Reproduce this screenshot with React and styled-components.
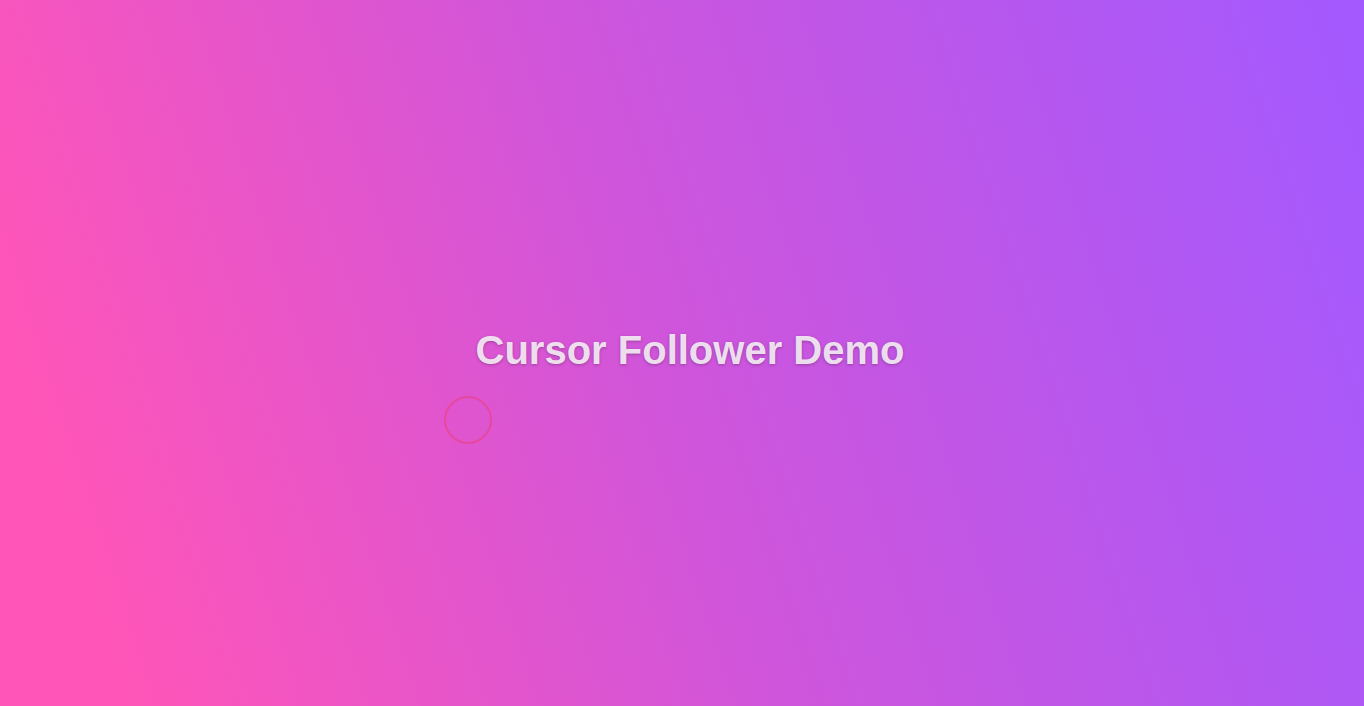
import styled, { createGlobalStyle } from "styled-components";

const GlobalStyle = createGlobalStyle`
  html, body {
    margin: 0;
    padding: 0;
    height: 100%;
  }
  #root {
    height: 100%;
  }
`;

const Page = styled.div`
  position: relative;
  width: 100%;
  height: 100vh;
  overflow: hidden;
  display: flex;
  align-items: center;
  justify-content: center;
  background: linear-gradient(72deg, #ff55b8 8%, #d055da 48%, #a259ff 100%);
`;

const Title = styled.h1`
  margin: 0 0 6px 16px;
  font-family: "Liberation Sans", Arial, sans-serif;
  font-size: 40px;
  font-weight: 700;
  color: rgba(245, 238, 245, 0.92);
  text-shadow: 0 1px 3px rgba(90, 40, 90, 0.45);
`;

const Follower = styled.div`
  position: absolute;
  left: ${(p) => p.x - 24}px;
  top: ${(p) => p.y - 24}px;
  width: 44px;
  height: 44px;
  border-radius: 50%;
  border: 2px solid rgba(240, 60, 110, 0.5);
  pointer-events: none;
`;

const App = () => {
  return (
    <>
      <GlobalStyle />
      <Page>
        <Title>Cursor Follower Demo</Title>
        <Follower x={468} y={420} />
      </Page>
    </>
  );
};

export default App;
